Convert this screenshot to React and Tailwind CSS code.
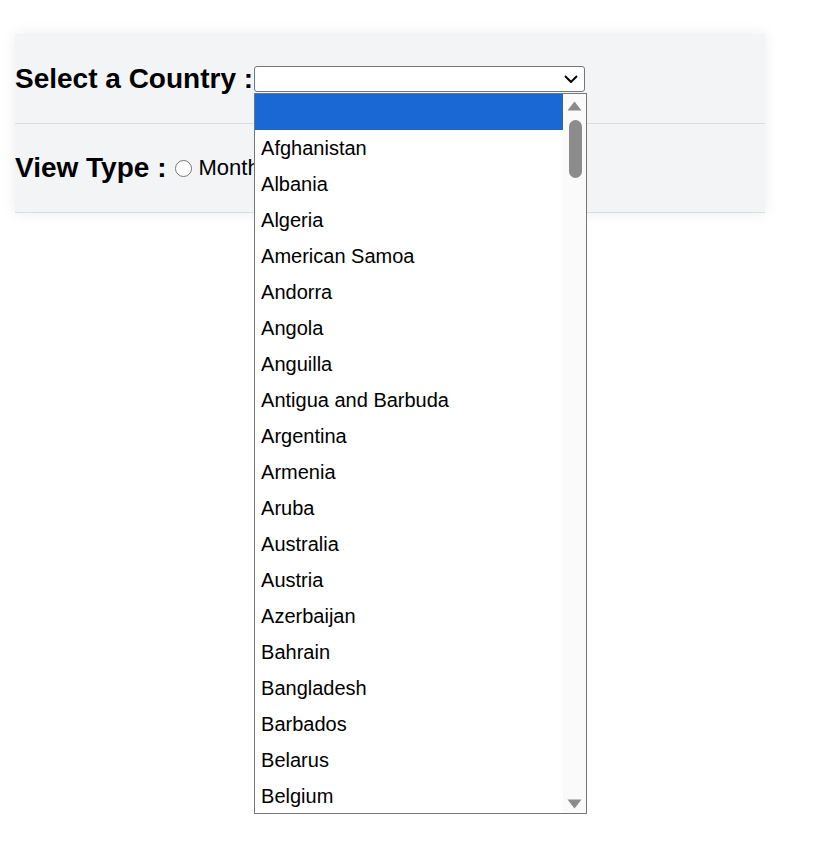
import React from "react";

const countries = [
  "",
  "Afghanistan",
  "Albania",
  "Algeria",
  "American Samoa",
  "Andorra",
  "Angola",
  "Anguilla",
  "Antigua and Barbuda",
  "Argentina",
  "Armenia",
  "Aruba",
  "Australia",
  "Austria",
  "Azerbaijan",
  "Bahrain",
  "Bangladesh",
  "Barbados",
  "Belarus",
  "Belgium",
];

const Radio = ({ label }) => (
  <label className="flex items-center">
    <span className="ml-[9px] w-[17px] h-[17px] rounded-full border border-[#767676] bg-white" />
    <span className="ml-[6px] text-[22px] text-black leading-none">{label}</span>
  </label>
);

const CountryDropdown = () => (
  <div className="absolute left-[-1px] top-[26px] w-[333px] h-[721px] z-10 flex bg-white border border-[#767676] overflow-hidden">
    {/* Options */}
    <div className="w-[308px] flex flex-col">
      {countries.map((c, i) => (
        <div
          key={i}
          className={`h-[36px] shrink-0 flex items-center pl-[6px] text-[20px] text-black ${
            i === 0 ? "bg-[#1a68d3]" : "bg-white"
          }`}
        >
          {c}
        </div>
      ))}
    </div>

    {/* Scrollbar */}
    <div className="flex-1 bg-[#fafafa] flex flex-col items-center">
      <svg width="15" height="10" viewBox="0 0 15 10" className="mt-[7px]">
        <path d="M7.5 0.5 L14.5 9.5 L0.5 9.5 Z" fill="#8a8a8a" />
      </svg>
      <div className="mt-[9px] ml-[1px] w-[13px] h-[58px] rounded-full bg-[#8c8c8c]" />
      <svg width="15" height="10" viewBox="0 0 15 10" className="mt-auto mb-[4px]">
        <path d="M0.5 0.5 L14.5 0.5 L7.5 9.5 Z" fill="#8a8a8a" />
      </svg>
    </div>
  </div>
);

export default function App() {
  return (
    <div className="min-h-screen bg-white pt-[34px] pl-[15px] font-['Liberation_Sans',Arial,sans-serif]">
      <div className="w-[750px] bg-[#f3f4f6] shadow-[0_0_14px_rgba(0,0,0,0.08)]">
        {/* Country row */}
        <div className="h-[90px] flex items-center border-b border-[#dcdcdc]">
          <span className="text-[28px] font-bold text-black leading-none">Select a Country :</span>
          <div className="relative ml-[1px] w-[331px] h-[26px] bg-white border border-[#767676] rounded-[3px]">
            <svg
              width="14"
              height="8"
              viewBox="0 0 14 8"
              className="absolute right-[6px] top-[8px]"
            >
              <path d="M1 1 L7 7 L13 1" fill="none" stroke="#000" strokeWidth="2" />
            </svg>
            <CountryDropdown />
          </div>
        </div>

        {/* View type row */}
        <div className="h-[89px] flex items-center border-b border-[#dcdcdc]">
          <span className="text-[28px] font-bold text-black leading-none">View Type :</span>
          <Radio label="Monthly" />
        </div>
      </div>
    </div>
  );
}
